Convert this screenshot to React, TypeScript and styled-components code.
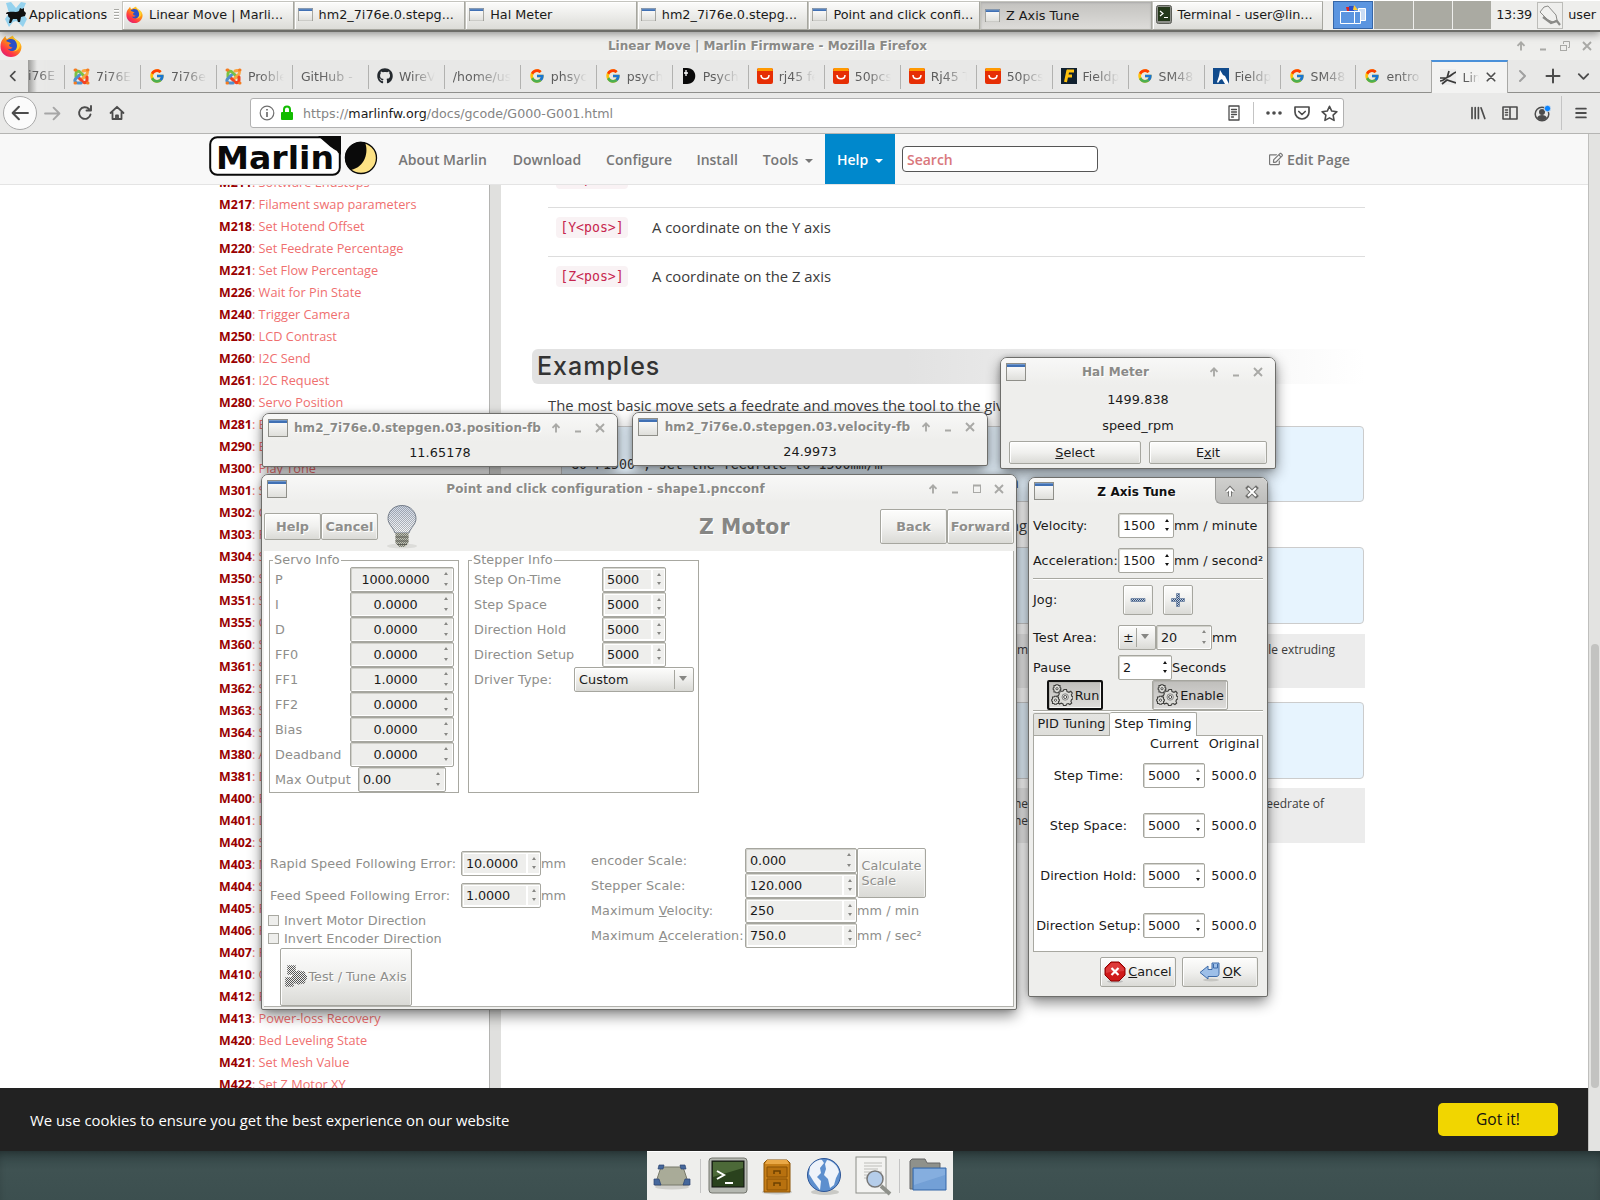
import React from "react";
import styled, { createGlobalStyle, css } from "styled-components";
import { FcGoogle } from "react-icons/fc";
import { FaGithub, FaRegEdit } from "react-icons/fa";

const GTK = `"DejaVu Sans", sans-serif`;
const SITE = `"Open Sans", "Noto Sans", sans-serif`;
const MONO = `"DejaVu Sans Mono", monospace`;

const Global = createGlobalStyle`
  html, body { margin: 0; padding: 0; }
  * { box-sizing: border-box; }
  body { width: 1600px; height: 1200px; overflow: hidden; font-family: ${GTK}; font-size: 12.8px; color: #1a1a1a; }
  svg { display: block; flex: none; }
`;

const Desktop = styled.div`
  position: relative;
  width: 1600px;
  height: 1200px;
  overflow: hidden;
  display: flex;
  flex-direction: column;
  white-space: nowrap;
  background: linear-gradient(#344647 1151px, #3f5252 1170px, #3c4f4f 1200px);
`;

/* ---------- top panel ---------- */
const Panel = styled.div`
  height: 32px;
  flex: none;
  display: flex;
  align-items: stretch;
  background: #eeeeec;
  border-bottom: 2px solid #6c6c68;
  border-top: 1px solid #fff;
  position: relative;
  box-shadow: 0 2px 8px rgba(0, 0, 0, 0.4);
`;
const AppMenu = styled.div`
  width: 122px;
  display: flex;
  align-items: center;
  padding-left: 5px;
  padding-bottom: 2px;
  gap: 2px;
`;
const Grip = styled.div`
  width: 5px;
  height: 12px;
  margin-left: 5px;
  background: repeating-linear-gradient(#a8a8a4 0 1px, #fff 1px 2px, transparent 2px 3px);
`;
const Task = styled.div<{ $on?: boolean }>`
  width: 171.6px;
  height: 29px;
  display: flex;
  align-items: center;
  gap: 6px;
  padding-left: ${(p) => (p.$on ? 4 : 3)}px;
  padding-bottom: 2px;
  border: 1px solid #a6a69f;
  border-left-color: #c4c4be;
  border-top-color: #c4c4be;
  box-shadow: inset 1px 1px 0 #fff;
  background: linear-gradient(#fcfcfb, #dcdcd8);
  ${(p) =>
    p.$on &&
    css`
      background: linear-gradient(#c3c2bf, #dddcd9);
      box-shadow: inset 0 1px 2px #aaa;
      padding-bottom: 0;
    `}
`;
const Pager = styled.div`
  display: flex;
  width: 158px;
  margin-left: 10px;
  gap: 1px;
`;
const Cell = styled.div<{ $on?: boolean }>`
  flex: 1;
  height: 28px;
  background: ${(p) => (p.$on ? "#5b95e0" : "#aaaaa2")};
  border: ${(p) => (p.$on ? "1px solid #3566a8" : "0")};
  display: flex;
  align-items: center;
  justify-content: center;
`;
const Clock = styled.div`
  width: 47px;
  display: flex;
  align-items: center;
  padding: 0 0 2px 5px;
  letter-spacing: -0.2px;
`;
const TrayBtn = styled.div`
  width: 26px;
  height: 27px;
  margin: 1px 4px 0 -1px;
  border: 1px solid #bcbcb8;
  display: flex;
  align-items: center;
  justify-content: center;
`;
const User = styled.div`
  display: flex;
  align-items: center;
  padding: 0 0 2px 1px;
`;

/* ---------- firefox chrome ---------- */
const FxTitle = styled.div`
  height: 28px;
  flex: none;
  display: flex;
  align-items: center;
  background: #eeeeec;
  color: #8a8a87;
  font-weight: bold;
  font-size: 12px;
  text-shadow: 1px 1px 0 #fff;
`;
const FxTitleText = styled.div`
  flex: 1;
  padding-right: 1px;
  text-align: center;
`;
const FxTitleBtns = styled.div`
  display: flex;
  gap: 8px;
  padding-right: 6px;
`;
const TabStrip = styled.div`
  height: 33px;
  flex: none;
  display: flex;
  background: #e8e8e7;
  border-bottom: 1px solid #8f8f8c;
  color: #5e5e5e;
`;
const TabScroll = styled.div`
  width: 28px;
  display: flex;
  align-items: center;
  padding-left: 7px;
`;
const TabFirst = styled.div`
  width: 36px;
  overflow: hidden;
  display: flex;
  align-items: center;
  font-size: 12.4px;
  padding-bottom: 1px;
  background: linear-gradient(90deg, #9a9a98, #e8e8e7 9px);
  mask-image: linear-gradient(90deg, #000 10px, rgba(0, 0, 0, 0.3) 26px);
`;
const Tab = styled.div<{ $icon?: boolean }>`
  width: 75.98px;
  height: 32px;
  display: flex;
  align-items: center;
  gap: 6px;
  padding-left: 9px;
  background: linear-gradient(#b2b2b0, #b2b2b0) left 5px / 1px 24px no-repeat;
`;
const ActiveTab = styled.div`
  width: 77px;
  height: 33px;
  display: flex;
  align-items: center;
  gap: 6px;
  padding: 0 10px 1px 8px;
  background: #f3f3f2;
  border: 1px solid #a8a8a5;
  border-bottom: 0;
  border-top: 2px solid #4a90d9;
`;
const Fade = styled.div<{ $w: number }>`
  width: ${(p) => p.$w}px;
  overflow: hidden;
  font-size: 12.5px;
  mask-image: linear-gradient(90deg, #000 35%, transparent 100%);
`;
const TabTools = styled.div`
  flex: 1;
  display: flex;
  align-items: center;
  justify-content: space-between;
  padding: 0 9px 0 6px;
`;
const NavBar = styled.div`
  height: 41px;
  flex: none;
  display: flex;
  align-items: center;
  background: #e9e9e8;
  border-bottom: 1px solid #b5b5b3;
`;
const BackCircle = styled.div`
  width: 34px;
  height: 34px;
  margin-left: 3px;
  border-radius: 50%;
  border: 1px solid #a9a9a9;
  background: #fbfbfb;
  display: flex;
  align-items: center;
  justify-content: center;
`;
const NavIcons = styled.div`
  width: 213px;
  display: flex;
  align-items: center;
  gap: 16px;
  padding-left: 7px;
`;
const UrlBar = styled.div`
  width: 1094px;
  height: 30px;
  display: flex;
  align-items: center;
  background: #fff;
  border: 1px solid #b1b1b1;
  border-radius: 3px;
  color: #858585;
  padding: 0 5px 0 8px;
  font-size: 12.65px;
  b { color: #1a1a1a; font-weight: normal; }
`;
const UrlText = styled.div`
  flex: 1;
  padding-left: 6px;
`;
const UrlTools = styled.div`
  display: flex;
  align-items: center;
  gap: 11px;
`;
const VRule = styled.div<{ $h: number }>`
  width: 1px;
  height: ${(p) => p.$h}px;
  background: #c4c4c4;
`;
const NavRight = styled.div`
  flex: 1;
  display: flex;
  align-items: center;
  justify-content: flex-end;
  gap: 16px;
  padding-right: 12px;
`;
const MenuGroup = styled.div`
  display: flex;
  align-items: center;
  gap: 12px;
  margin-left: -6px;
`;

/* ---------- web page ---------- */
const Viewport = styled.div`
  height: 1017px;
  flex: none;
  display: flex;
  background: #fff;
`;
const Page = styled.div`
  width: 1588px;
  display: flex;
  flex-direction: column;
  font-family: ${SITE};
`;
const ScrollTrack = styled.div`
  width: 12px;
  background: #e3e3e1;
  border-left: 1px solid #bfbfbd;
  padding: 510px 1px 0 2px;
`;
const ScrollThumb = styled.div`
  height: 444px;
  border-radius: 5px;
  background: #c3c3c1;
`;
const SiteHead = styled.header`
  height: 51px;
  flex: none;
  display: flex;
  align-items: center;
  padding-left: 209px;
  background: #f8f8f8;
  border-bottom: 1px solid #e4e4e4;
  color: #777;
  font-weight: 600;
  font-size: 14px;
`;
const LogoLink = styled.div`
  align-self: flex-start;
  padding-top: 2px;
`;
const Menu = styled.nav`
  display: flex;
  align-items: center;
  height: 50px;
  gap: 24.3px;
  margin-left: 20.5px;
`;
const MenuItem = styled.span<{ $w: number }>`
  width: ${(p) => p.$w}px;
  display: flex;
  align-items: center;
  justify-content: space-between;
`;
const HelpItem = styled.span`
  width: 70px;
  height: 50px;
  margin-left: -12px;
  padding: 0 12px;
  display: flex;
  align-items: center;
  justify-content: space-between;
  background: #0088cc;
  color: #fff;
`;
const Caret = styled.i`
  border: 4px solid transparent;
  border-top-color: currentColor;
  border-bottom: 0;
  margin-top: 3px;
`;
const Search = styled.div`
  width: 196px;
  height: 26px;
  margin-left: 7px;
  padding-left: 4px;
  line-height: 25px;
  border: 1px solid #555;
  border-radius: 4px;
  background: #fff;
  color: #d9777c;
  font-weight: 600;
  font-size: 14px;
`;
const EditLink = styled.div`
  display: flex;
  align-items: center;
  gap: 4px;
  margin-left: 171px;
  font-size: 14.2px;
`;
const SiteBody = styled.div`
  height: 903px;
  flex: none;
  overflow: hidden;
  display: flex;
`;
const Sidebar = styled.div`
  width: 489px;
  padding-left: 219px;
`;
const CodeList = styled.div`
  margin-top: -14px;
`;
const CodeRow = styled.div`
  height: 22px;
  line-height: 22px;
  font-size: 12.75px;
  color: #ef6f6f;
  b { color: #900; font-weight: 700; font-size: 12.4px; }
`;
const Divider = styled.div`
  width: 12px;
  border-left: 1px solid #b4b4b2;
  background: #e0e0de;
`;
const Article = styled.article`
  width: 864px;
  color: #3b3b3b;
  font-size: 14.8px;
`;
const ParamRow = styled.div<{ $h: number; $cut?: boolean }>`
  height: ${(p) => p.$h}px;
  margin-left: 47px;
  padding: ${(p) => (p.$cut ? 0 : 8)}px 0 0 8px;
  display: flex;
  align-items: flex-start;
  gap: 24px;
  line-height: 22px;
  border-top: ${(p) => (p.$cut ? "0" : "1px solid #ddd")};
`;
const Badge = styled.code<{ $cut?: boolean }>`
  width: 72px;
  height: 21px;
  margin-top: ${(p) => (p.$cut ? -17 : 1)}px;
  text-align: center;
  border-radius: 4px;
  background: #f9f2f4;
  color: #c7254e;
  font: 13.2px/21px ${MONO};
`;
const Heading = styled.h2`
  margin: 44px 0 0 31px;
  height: 35px;
  line-height: 35px;
  padding-left: 5px;
  border-radius: 6px;
  font-family: "Inter", "Noto Sans", sans-serif;
  font-weight: 500;
  font-size: 25px;
  letter-spacing: 1px;
  color: #333;
  background: linear-gradient(90deg, #e2e2e2 45%, #fff);
`;
const Para = styled.p<{ $h: number; $w?: number }>`
  margin: 0 0 0 47px;
  height: ${(p) => p.$h}px;
  line-height: ${(p) => p.$h}px;
  ${(p) => p.$w && css`width: ${p.$w}px; text-align: right;`}
`;
const CodeBlock = styled.pre<{ $h: number; $gap: number }>`
  margin: 0 1px ${(p) => p.$gap}px 60px;
  height: ${(p) => p.$h}px;
  padding: 28px 9px 0;
  font: 13.28px/19px ${MONO};
  color: #333;
  background: #e7f4fe;
  border: 1px solid #ccc;
  border-radius: 4px;
`;
const Quote = styled.div<{ $h: number; $gap: number; $pad: number }>`
  margin: 0 0 ${(p) => p.$gap}px 60px;
  height: ${(p) => p.$h}px;
  padding: 7px ${(p) => p.$pad}px 0 0;
  text-align: right;
  background: #ececec;
  font-size: 12px;
  line-height: 17px;
`;
const QuoteLine = styled.div`
  display: grid;
  grid-template-columns: 467px 1fr;
`;
const Cookie = styled.div`
  height: 63px;
  flex: none;
  display: flex;
  align-items: center;
  justify-content: space-between;
  padding: 0 30px;
  background: #222;
  color: #fff;
  font-size: 14.88px;
`;
const GotIt = styled.div`
  width: 120px;
  height: 33px;
  line-height: 32px;
  text-align: center;
  border-radius: 5px;
  background: #f1d600;
  color: #111;
  font-size: 15.6px;
`;

/* ---------- dock ---------- */
const DockWrap = styled.div`
  height: 49px;
  flex: none;
  display: flex;
  padding-left: 647px;
  box-shadow: inset 0 6px 10px -4px rgba(0, 0, 0, 0.35);
`;
const Dock = styled.div`
  width: 306px;
  height: 49px;
  display: grid;
  grid-template-columns: 47px 8px 54px 44px 48px 45px 9px 40px;
  align-items: center;
  padding: 0 0 0 6px;
  background: #eeeeec;
  border-top: 1px solid #fff;
`;

/* ---------- windows ---------- */
const Win = styled.section<{ $x: number; $y: number; $w: number; $h: number }>`
  position: absolute;
  left: ${(p) => p.$x}px;
  top: ${(p) => p.$y}px;
  width: ${(p) => p.$w}px;
  height: ${(p) => p.$h}px;
  display: flex;
  flex-direction: column;
  background: #eeeeec;
  border: 1px solid #6e6e6b;
  border-radius: 7px 7px 2px 2px;
  overflow: hidden;
  letter-spacing: 0.08px;
`;
const Shadow = styled.div<{ $x: number; $y: number; $w: number; $h: number }>`
  position: absolute;
  left: ${(p) => p.$x}px;
  top: ${(p) => p.$y}px;
  width: ${(p) => p.$w}px;
  height: ${(p) => p.$h}px;
  border-radius: 7px;
  box-shadow: 0 6px 14px rgba(0, 0, 0, 0.45), 0 0 5px rgba(0, 0, 0, 0.2);
`;
const TitleRow = styled.div<{ $h: number; $active?: boolean }>`
  height: ${(p) => p.$h}px;
  flex: none;
  display: flex;
  align-items: center;
  padding-left: 5px;
  background: linear-gradient(#f8f8f7, #eeeeec);
  font-weight: bold;
  font-size: 12px;
  color: ${(p) => (p.$active ? "#111" : "#8a8a87")};
  text-shadow: 1px 1px 0 #fff;
`;
const TitleText = styled.div`
  flex: 1;
  text-align: center;
  padding: 1px 0 0 4px;
`;
const TitleBtns = styled.div<{ $active?: boolean }>`
  display: flex;
  gap: 8px;
  padding: 0 10px 0 6px;
  ${(p) =>
    p.$active &&
    css`
      align-self: stretch;
      align-items: center;
      padding: 3px 8px 0 7px;
      background: linear-gradient(#d0d0ce, #bdbdbb);
      border-left: 1px solid #9b9b99;
      border-bottom: 1px solid #9b9b99;
      border-radius: 0 0 0 6px;
    `}
`;
const Reading = styled.div<{ $h: number }>`
  height: ${(p) => p.$h}px;
  line-height: ${(p) => p.$h}px;
  text-align: center;
`;
const Btn = styled.button<{ $w: number; $h: number; $off?: boolean; $bold?: boolean; $pressed?: boolean; $focus?: boolean }>`
  width: ${(p) => p.$w}px;
  height: ${(p) => p.$h}px;
  flex: none;
  display: flex;
  align-items: center;
  justify-content: center;
  gap: 2px;
  padding: 0;
  margin: 0;
  font-family: inherit;
  font-size: 12.8px;
  font-weight: ${(p) => (p.$bold ? "bold" : "normal")};
  text-align: left;
  white-space: pre;
  line-height: 15px;
  color: ${(p) => (p.$off ? "#8e8e8b" : "#1a1a1a")};
  text-shadow: ${(p) => (p.$off ? "1px 1px 0 #fff" : "none")};
  border: ${(p) => (p.$focus ? "2px solid #111" : "1px solid #a6a69f")};
  border-radius: 2px;
  background: ${(p) =>
    p.$pressed ? "linear-gradient(#bfbebb, #dedddb)" : "linear-gradient(#fdfdfc, #f0f0ee 50%, #dadad6)"};
  box-shadow: ${(p) => (p.$pressed ? "inset 1px 1px 0 #b3b2ae, inset -1px -1px 0 #f6f6f5" : "inset 1px 1px 0 #fff, inset -1px 0 0 #f2f2f0")};
`;
const SpinBox = styled.div<{ $w: number; $off?: boolean; $plain?: boolean }>`
  width: ${(p) => p.$w}px;
  height: 25px;
  flex: none;
  display: flex;
  align-items: stretch;
  padding: ${(p) => (p.$plain ? "1px" : "2px")};
  border: 1px solid #a6a69f;
  border-radius: 2px;
  background: ${(p) => (p.$plain ? "#eeeeec" : "#fff")};
  box-shadow: ${(p) => (p.$plain ? "inset 1px 1px 0 #d0d0ca, inset -1px -1px 0 #fff" : "inset 1px 1px 0 #d6d6d0")};
  color: #1a1a1a;
`;
const SpinVal = styled.div<{ $off?: boolean; $center?: boolean; $plain?: boolean }>`
  flex: 1;
  display: flex;
  align-items: center;
  justify-content: ${(p) => (p.$center ? "center" : "flex-start")};
  padding-left: ${(p) => (p.$plain ? 3 : 2)}px;
  padding-right: ${(p) => (p.$center ? 4 : 0)}px;
  letter-spacing: -0.12px;
  background: ${(p) => (p.$off ? "#eeeeec" : "transparent")};
`;
const Steps = styled.div<{ $off?: boolean; $plain?: boolean }>`
  width: ${(p) => (p.$plain ? 12 : 11)}px;
  margin-left: ${(p) => (p.$plain ? 0 : 2)}px;
  margin-right: ${(p) => (p.$plain ? 0 : -1)}px;
  display: flex;
  flex-direction: column;
  justify-content: space-between;
  align-items: center;
  padding: 3px 0 4px;
  background: ${(p) => (p.$off ? "#f0f0ee" : "transparent")};
`;
const Arrow = styled.i<{ $down?: boolean; $c: string }>`
  border: 2.5px solid transparent;
  ${(p) =>
    p.$down
      ? css`border-top: 3px solid ${p.$c}; border-bottom: 0;`
      : css`border-bottom: 3px solid ${p.$c}; border-top: 0;`}
`;
const Combo = styled.div<{ $w: number }>`
  width: ${(p) => p.$w}px;
  height: 25px;
  flex: none;
  display: flex;
  align-items: center;
  padding-left: 4px;
  border: 1px solid #a6a69f;
  border-radius: 2px;
  color: #1a1a1a;
  background: linear-gradient(#fdfdfc, #eeeeec 50%, #dadad6);
  box-shadow: inset 1px 1px 0 #fff;
`;
const ComboText = styled.span`
  flex: 1;
`;
const ComboArrow = styled.span`
  width: 19px;
  height: 19px;
  padding: 0 3px 2px 0;
  display: flex;
  align-items: center;
  justify-content: center;
  border-left: 1px solid #a6a69f;
  i { border: 4.5px solid transparent; border-top: 5px solid #878784; border-bottom: 0; }
`;

/* ---------- pncconf window ---------- */
const PncHead = styled.div`
  height: 49px;
  flex: none;
  display: flex;
  align-items: center;
  padding: 0 2px;
`;
const PncTitle = styled.div`
  width: 90px;
  margin: 0 auto 0 277px;
  font-size: 20.4px;
  font-weight: bold;
  color: #868684;
  text-shadow: 1px 1px 0 #fff;
`;
const BulbSlot = styled.div`
  width: 40px;
  margin-left: 4px;
  display: flex;
  justify-content: center;
`;
const Notebook = styled.div`
  height: 456px;
  margin: 0 2px;
  background: #fff;
  border-right: 1px solid #b2b2ad;
  border-bottom: 1px solid #b2b2ad;
  color: #8e8e8b;
  display: flex;
  flex-direction: column;
`;
const Frames = styled.div`
  height: 297px;
  flex: none;
  display: flex;
  align-items: flex-start;
  gap: 9px;
  padding: 9px 0 0 5px;
`;
const Frame = styled.div<{ $w: number }>`
  width: ${(p) => p.$w}px;
  height: 233px;
  border: 1px solid #a8a8a1;
  padding-left: 5px;
`;
const Legend = styled.div`
  width: max-content;
  height: 15px;
  line-height: 15px;
  margin: -9px 0 0 -2px;
  padding: 0 1px;
  background: #fff;
`;
const Field = styled.div<{ $lab: number }>`
  height: 25px;
  display: grid;
  grid-template-columns: ${(p) => p.$lab}px auto;
  justify-content: start;
  align-items: center;
`;
const Lower = styled.div`
  display: flex;
  flex: 1;
`;
const LowLeft = styled.div`
  width: 327px;
  padding: 3px 0 0 6px;
`;
const ErrRow = styled.div`
  height: 25px;
  display: flex;
  align-items: center;
  margin-bottom: 7px;
`;
const ErrLabel = styled.div`
  width: 191px;
`;
const Checks = styled.div`
  margin: -4px 0 1px -2px;
`;
const Check = styled.div`
  height: 18px;
  display: flex;
  align-items: center;
  gap: 5px;
`;
const CheckBox = styled.i`
  width: 11px;
  height: 11px;
  border: 1px solid #a8a8a1;
  background: #eeeeec;
`;
const TestSlot = styled.div`
  padding-left: 10px;
  button { padding-bottom: 2px; gap: 1px; }
`;
const ScaleGrid = styled.div`
  display: grid;
  grid-template-columns: 154px 112px 70px;
  grid-template-rows: repeat(4, 25px);
  height: 100px;
  align-items: center;
`;
const Span2 = styled.div`
  grid-row: span 2;
`;

/* ---------- tuning window ---------- */
const TuneBody = styled.div`
  padding: 4px 4px 0;
  display: flex;
  flex-direction: column;
`;
const TuneRow = styled.div<{ $h: number }>`
  height: ${(p) => p.$h}px;
  display: flex;
  align-items: center;
`;
const TuneLabel = styled.div`
  width: 85px;
  flex: none;
`;
const Jog = styled.div`
  display: flex;
  gap: 10px;
  padding-left: 5px;
`;
const RunRow = styled.div`
  height: 30px;
  display: flex;
  gap: 49px;
  padding-left: 14px;
`;
const HLine = styled.div`
  height: 2px;
  flex: none;
  background: #a8a8a1;
  border-bottom: 1px solid #fff;
`;
const TuneTabs = styled.div`
  height: 24px;
  display: flex;
  align-items: flex-end;
`;
const TuneTab = styled.div<{ $on?: boolean; $w: number }>`
  width: ${(p) => p.$w}px;
  height: ${(p) => (p.$on ? 24 : 22)}px;
  line-height: ${(p) => (p.$on ? 22 : 20)}px;
  margin-bottom: ${(p) => (p.$on ? 0 : 1)}px;
  position: relative;
  z-index: 1;
  text-align: center;
  border: 1px solid #a8a8a1;
  border-bottom: 0;
  border-radius: 2px 2px 0 0;
  border-left-width: ${(p) => (p.$on ? 0 : 1)}px;
  background: ${(p) => (p.$on ? "#fff" : "linear-gradient(#e4e4e1, #dededa)")};
`;
const TunePage = styled.div`
  height: 217px;
  margin-top: -1px;
  background: #fff;
  border: 1px solid #a8a8a1;
`;
const Cols = styled.div`
  display: flex;
  height: 14px;
  line-height: 15px;
  padding-left: 116px;
  gap: 10px;
`;
const Timing = styled.div`
  height: 50px;
  display: grid;
  grid-template-columns: 109px 62px 58px;
  align-items: center;
  text-align: center;
`;
const Footer = styled.div`
  height: 39px;
  display: flex;
  align-items: center;
  justify-content: flex-end;
  gap: 6px;
  padding-right: 5px;
`;

const HalButtons = styled.div`
  display: flex;
  gap: 8px;
  padding: 3px 0 0 8px;
`;

/* ---------- pieces ---------- */
const WinIcon = ({ s = 20 }: { s?: number }) => (
  <svg width={s} height={s * 0.9} viewBox="0 0 20 18">
    <defs>
      <linearGradient id="wi" x1="0" y1="0" x2="0" y2="1">
        <stop offset="0" stopColor="#fff" />
        <stop offset="1" stopColor="#dededa" />
      </linearGradient>
    </defs>
    <rect x="0.5" y="0.5" width="19" height="17" fill="url(#wi)" stroke="#8f8f89" />
    <rect x="1" y="1" width="18" height="3" fill="#4070b4" />
    <rect x="1" y="1" width="18" height="1" fill="#6f97cc" />
  </svg>
);
const TermIcon = () => (
  <svg width="16" height="20" viewBox="0 0 16 20">
    <rect x="0.5" y="0.5" width="15" height="18" rx="2" fill="#8d8f89" stroke="#5c5e58" />
    <rect x="2" y="2" width="12" height="14" fill="#24381a" />
    <path d="M4 6l3 2.500L4 11M8 12.500h4" stroke="#fff" strokeWidth="1.200" fill="none" />
  </svg>
);
const Firefox = ({ s }: { s: number }) => (
  <svg width={s} height={s} viewBox="0 0 22 22">
    <defs>
      <linearGradient id="fx" x1="0.9" y1="0" x2="0.2" y2="1">
        <stop offset="0" stopColor="#fff04d" />
        <stop offset="0.4" stopColor="#ff980e" />
        <stop offset="0.75" stopColor="#ff3647" />
        <stop offset="1" stopColor="#d81f75" />
      </linearGradient>
    </defs>
    <path d="M3 4C4 3 5 1 5.500 1c0 1.500.5 2.500 1.500 3C9 3 10 2 13 .5c0 2 2 3 4 5 2 .5 4 3 4.500 6C21.500 17.500 17 22 11 22S.5 17.500.5 11.500C.5 8 1.500 5.500 3 4z" fill="url(#fx)" />
    <path d="M6 6c3-3 8-2.500 10.500.5 2 2.500 1.500 7-1 8.500-3 2-6.500 1-8-1.500 2 1 4 .5 5-1-1.500 0-3.500-1-3.500-2.500 0-.7 1-1 2-1-.5-1.500-3-2-5-3z" fill="#2b50c8" />
    <path d="M12.500 1c0 3 4.500 4.500 4.500 10 0 3-2 5-4 5.500 4 0 7-3 7-7C20 5.500 14.500 4.500 12.500 1z" fill="#ffcf2e" />
  </svg>
);
const Mouse = () => (
  <svg width="22" height="26" viewBox="0 0 22 26">
    <path d="M1 1l5-1 5 6 5-6 5 1-4 9 5 7-4 8-5-5-2-1-3 1-4 5-4-8 4-6z" fill="#8fd0ee" opacity="0.95" />
    <path d="M1 12c0-2 2-2 3-2 4-1 7 1 10-1l1-3 2 1 2-1 0 3 2 2-1 3-4 1-1 5h-2l-1-3H8l-2 4H4l1-5c-2-1-2-2-2-4z" fill="#111" />
  </svg>
);
const Up = ({ c = "#a9a9a6" }: { c?: string }) => (
  <svg width="14" height="14" viewBox="0 0 14 14">
    <path d="M7 11.500V4M3.500 6.800L7 3.300l3.500 3.500" stroke={c} strokeWidth="1.900" fill="none" />
  </svg>
);
const UpHot = () => (
  <svg width="14" height="14" viewBox="0 0 14 14">
    <path d="M7 11.500V4M3.500 6.800L7 3.300l3.500 3.500" stroke="#6f6f6d" strokeWidth="3.800" fill="none" />
    <path d="M7 11.500V4M3.500 6.800L7 3.300l3.500 3.500" stroke="#fff" strokeWidth="1.900" fill="none" />
  </svg>
);
const Min = () => (
  <svg width="14" height="14" viewBox="0 0 14 14">
    <path d="M4 10.500h6" stroke="#a9a9a6" strokeWidth="2" />
  </svg>
);
const Max = () => (
  <svg width="14" height="14" viewBox="0 0 14 14">
    <rect x="3.500" y="3.500" width="7" height="7" stroke="#a9a9a6" fill="none" />
    <path d="M3 3.500h8" stroke="#a9a9a6" strokeWidth="2" />
  </svg>
);
const Restore = () => (
  <svg width="14" height="14" viewBox="0 0 14 14">
    <rect x="2.500" y="6.500" width="6" height="5" stroke="#a9a9a6" fill="none" />
    <path d="M5.500 5V2.500h6v6H10" stroke="#a9a9a6" fill="none" />
  </svg>
);
const Close = () => (
  <svg width="14" height="14" viewBox="0 0 14 14">
    <path d="M3 3l8 8M11 3l-8 8" stroke="#a9a9a6" strokeWidth="1.900" />
  </svg>
);
const CloseHot = () => (
  <svg width="14" height="14" viewBox="0 0 14 14">
    <path d="M3 3l8 8M11 3l-8 8" stroke="#6f6f6d" strokeWidth="4" strokeLinecap="square" />
    <path d="M3 3l8 8M11 3l-8 8" stroke="#fff" strokeWidth="2" />
  </svg>
);
const Joomla = () => (
  <svg width="17" height="17" viewBox="0 0 17 17" fill="none" strokeWidth="3" strokeLinecap="round">
    <path d="M3 10V6.500C3 4 5.500 3.500 7 5l5 5" stroke="#7ac143" transform="translate(0 -1)" />
    <path d="M7 3l2-.500C11 2 12 4 11 6L6 11" stroke="#f9a541" transform="translate(3 0)" />
    <path d="M14 8v3c0 3-3 3-4 2L5 8" stroke="#f44321" transform="translate(0 1)" />
    <path d="M10 14H7c-2.500 0-4-2-2.500-4l4-4" stroke="#5091cd" transform="translate(-2 1)" />
    <path d="M2 2h1M14.500 2h.5M2 15h.500M14.500 15h.5" stroke="#f47b20" />
  </svg>
);
const Ali = () => (
  <svg width="16" height="16" viewBox="0 0 16 16">
    <rect width="16" height="16" rx="2" fill="#e62e04" />
    <path d="M1 0h14l1 3H0z" fill="#ff9900" />
    <path d="M4 7c0 5 8 5 8 0" stroke="#fff" strokeWidth="1.500" fill="none" />
  </svg>
);
const Psy = () => (
  <svg width="16" height="16" viewBox="0 0 16 16">
    <path d="M2 0h4c11 0 11 16 0 16H2z" fill="#0a0a0a" />
    <path d="M5 2v6M3 5h4" stroke="#fff" strokeWidth="1.300" />
  </svg>
);
const FieldF = () => (
  <svg width="16" height="16" viewBox="0 0 16 16">
    <rect width="16" height="16" fill="#10202e" />
    <path d="M6 3h7M5 8h6M7 2L4.500 14" stroke="#ffc20e" strokeWidth="3" />
  </svg>
);
const FieldB = () => (
  <svg width="16" height="16" viewBox="0 0 16 16">
    <rect width="16" height="16" fill="#114b8c" />
    <path d="M7 2l3 5 2 1 4 8h-4l-3-5-2 1-2 3-1-1 2-6z" fill="#fff" />
  </svg>
);
const LinIcon = () => (
  <svg width="16" height="16" viewBox="0 0 16 16">
    <rect width="16" height="16" fill="#ececec" />
    <path d="M0 12c4 0 5-3 8-4s5-4 8-5M7 9l2-7M2 15l5-4 9 3M0 9h6" stroke="#3a3a3a" strokeWidth="1.700" fill="none" />
  </svg>
);
const G = () => <FcGoogle size={16} />;

const tabs: { t: string; i?: React.ReactNode }[] = [
  { t: "7i76E", i: <Joomla /> },
  { t: "7i76e", i: <G /> },
  { t: "Proble", i: <Joomla /> },
  { t: "GitHub - " },
  { t: "WireV", i: <FaGithub size={16} color="#24292e" /> },
  { t: "/home/us" },
  { t: "phsyc", i: <G /> },
  { t: "psych", i: <G /> },
  { t: "Psych", i: <Psy /> },
  { t: "rj45 fe", i: <Ali /> },
  { t: "50pcs", i: <Ali /> },
  { t: "Rj45 T", i: <Ali /> },
  { t: "50pcs", i: <Ali /> },
  { t: "Fieldp", i: <FieldF /> },
  { t: "SM48", i: <G /> },
  { t: "Fieldp", i: <FieldB /> },
  { t: "SM48", i: <G /> },
  { t: "entro", i: <G /> },
];

const codes: [string, string][] = [
  ["M211", "Software Endstops"],
  ["M217", "Filament swap parameters"],
  ["M218", "Set Hotend Offset"],
  ["M220", "Set Feedrate Percentage"],
  ["M221", "Set Flow Percentage"],
  ["M226", "Wait for Pin State"],
  ["M240", "Trigger Camera"],
  ["M250", "LCD Contrast"],
  ["M260", "I2C Send"],
  ["M261", "I2C Request"],
  ["M280", "Servo Position"],
  ["M281", "Edit Servo Angles"],
  ["M290", "Babystep"],
  ["M300", "Play Tone"],
  ["M301", "Set Hotend PID"],
  ["M302", "Cold Extrude"],
  ["M303", "PID autotune"],
  ["M304", "Set Bed PID"],
  ["M350", "Set micro-stepping"],
  ["M351", "Set Microstep Pins"],
  ["M355", "Case Light Control"],
  ["M360", "SCARA Theta A"],
  ["M361", "SCARA Theta-B"],
  ["M362", "SCARA Psi-A"],
  ["M363", "SCARA Psi-B"],
  ["M364", "SCARA Psi-C"],
  ["M380", "Activate Solenoid"],
  ["M381", "Deactivate Solenoids"],
  ["M400", "Finish Moves"],
  ["M401", "Deploy Probe"],
  ["M402", "Stow Probe"],
  ["M403", "MMU2 Filament Type"],
  ["M404", "Set Filament Diameter"],
  ["M405", "Filament Width Sensor On"],
  ["M406", "Filament Width Sensor Off"],
  ["M407", "Filament Width"],
  ["M410", "Quickstop"],
  ["M412", "Filament Runout"],
  ["M413", "Power-loss Recovery"],
  ["M420", "Bed Leveling State"],
  ["M421", "Set Mesh Value"],
  ["M422", "Set Z Motor XY"],
];

type SpinProps = { w: number; v: string; off?: boolean; center?: boolean; plain?: boolean; half?: boolean };
const Spin = ({ w, v, off, center, plain, half }: SpinProps) => (
  <SpinBox $w={w} $plain={plain}>
    <SpinVal $off={off && !plain} $center={center} $plain={plain}>{v}</SpinVal>
    <Steps $off={off && !plain} $plain={plain}>
      <Arrow $c={off || half ? "#878784" : "#111"} />
      <Arrow $down $c={off ? "#878784" : "#111"} />
    </Steps>
  </SpinBox>
);

type FrameProps = {
  x: number; y: number; w: number; h: number; title: string; th: number;
  active?: boolean; max?: boolean; children: React.ReactNode;
};
const AppWindow = ({ x, y, w, h, title, th, active, max, children }: FrameProps) => (
  <>
    <Shadow $x={x} $y={y} $w={w} $h={h} />
    <Win $x={x} $y={y} $w={w} $h={h}>
      <TitleRow $h={th} $active={active}>
        <WinIcon />
        <TitleText>{title}</TitleText>
        {active ? (
          <TitleBtns $active><UpHot /><CloseHot /></TitleBtns>
        ) : (
          <TitleBtns><Up /><Min />{max && <Max />}<Close /></TitleBtns>
        )}
      </TitleRow>
      {children}
    </Win>
  </>
);

const Gears = ({ off }: { off?: boolean }) => (
  <svg width="22" height="22" viewBox="0 0 22 22">
    <defs>
      <pattern id="dots" width="2" height="2" patternUnits="userSpaceOnUse">
        <rect width="1" height="1" fill="#555" />
        <rect x="1" y="1" width="1" height="1" fill="#555" />
      </pattern>
    </defs>
    {off ? (
      <g fill="url(#dots)" stroke="url(#dots)" strokeWidth="1.500">
        <path d="M14 6l2 1 3 0 1 3 2 2-2 3-1 3-3 0-2 1-3-1-2-1-1-3-1-2 2-2 0-3 3 0z" />
        <path d="M3 1h7v8H3z" />
        <path d="M1 13h7v8H1z" />
      </g>
    ) : (
      <>
        <g fill="#dcdcd8" stroke="#3f3f3d" strokeWidth="1.100">
          <path d="M13 5.500h2.500l.5 2 2 .8 1.800-1 1.500 1.800-1 1.700.6 1.700h1v2.500l-1.300.5-.7 1.700.8 1.800-1.800 1.500-1.700-1-1.700.6-.5 1.400h-2.500l-.5-1.500-1.800-.8-1.700.8-1.300-1.800.8-1.700-.6-1.600-1.400-.6v-2.200l1.500-.6.8-1.700-.8-1.700 1.700-1.500 1.700.8 1.500-.6z" />
          <path d="M3 1.500h1.500l.5-.8h2l.5.8H9v2l.8.500v1.500L9 6v2H7.500l-.5.800H5L4.500 8H3V6l-.8-.500V4L3 3.500z" />
          <path d="M1.500 13H3l.5-.8h2l.5.8h1.500v2l.8.500V17l-.8.500v2H6l-.5.800h-2L3 19.500H1.500v-2L.7 17v-1.500l.8-.500z" />
        </g>
        <g fill="#fff" stroke="#4a4a48">
          <circle cx="14.200" cy="13" r="3.200" fill="none" stroke="#888" />
          <circle cx="14.200" cy="13" r="1.500" />
          <circle cx="6" cy="4.700" r="1.100" />
          <circle cx="4.500" cy="16.200" r="1.100" />
        </g>
      </>
    )}
  </svg>
);
const Bulb = () => (
  <svg width="34" height="45" viewBox="0 0 34 45">
    <defs>
      <pattern id="mesh" width="2" height="2" patternUnits="userSpaceOnUse">
        <rect width="1" height="1" fill="#3c4654" opacity="0.600" />
        <rect x="1" y="1" width="1" height="1" fill="#3c4654" opacity="0.600" />
      </pattern>
      <linearGradient id="bg" x1="0" y1="0" x2="0" y2="1">
        <stop offset="0" stopColor="#ccd4e2" />
        <stop offset="1" stopColor="#f8f8f8" />
      </linearGradient>
    </defs>
    <ellipse cx="17" cy="42" rx="15" ry="2.500" fill="#dcdcd9" />
    <path d="M17 1.500C8 1.500 3 8 3 14.500c0 6 5 8.500 7 14.500h14c2-6 7-8.500 7-14.500S26 1.500 17 1.500z" fill="url(#bg)" stroke="#7c8490" />
    <path d="M17 1.500C8 1.500 3 8 3 14.500c0 6 5 8.500 7 14.500h14c2-6 7-8.500 7-14.500S26 1.500 17 1.500z" fill="url(#mesh)" opacity="0.600" />
    <path d="M10.500 29h13v10l-4 4h-5l-4-4z" fill="#c4c2ad" />
    <path d="M10.500 29h13v10l-4 4h-5l-4-4z" fill="url(#mesh)" />
    <path d="M10.500 33h13M10.500 37h13M12 40.500h10" stroke="#5f5f56" />
  </svg>
);
const MinusPlus = ({ plus }: { plus?: boolean }) => (
  <svg width="16" height="16" viewBox="0 0 16 16">
    <defs>
      <pattern id="pm" width="2" height="2" patternUnits="userSpaceOnUse">
        <rect width="2" height="2" fill="#c3cddb" />
        <rect width="1" height="1" fill="#31507c" />
        <rect x="1" y="1" width="1" height="1" fill="#31507c" />
      </pattern>
    </defs>
    <path d={plus ? "M6.500 1.500h3v5h5v3h-5v5h-3v-5h-5v-3h5z" : "M1 6.500h14v3H1z"} fill="url(#pm)" stroke="#6d83a3" strokeWidth="0.800" />
  </svg>
);
const StopIcon = () => (
  <svg width="22" height="22" viewBox="0 0 22 22">
    <ellipse cx="11" cy="20.500" rx="8" ry="1.500" fill="#bbb" />
    <path d="M7 1h8l6 6v7l-6 6H7l-6-6V7z" fill="#cf1a1a" stroke="#8c0000" />
    <path d="M7.500 2h7L20 7.500V10c-6 1-12 0-18 2V7.500z" fill="#e65050" opacity="0.600" />
    <path d="M7.500 7l7 7M14.500 7l-7 7" stroke="#fff" strokeWidth="2.200" />
  </svg>
);
const OkIcon = () => (
  <svg width="22" height="20" viewBox="0 0 22 20">
    <ellipse cx="12" cy="18" rx="8" ry="1.500" fill="#c6c6c2" />
    <path d="M1 10.500L9 4v3.500h4V1h7v10.500c0 2-1 3-3 3H9V17z" fill="#9dbfe8" stroke="#3c6aa8" />
    <path d="M14.500 2v4h4V2" fill="none" stroke="#3c6aa8" />
  </svg>
);

const Logo = () => (
  <svg width="169" height="40" viewBox="0 0 169 40">
    <rect x="1.200" y="1.200" width="129.600" height="37.600" rx="7" fill="#fff" stroke="#0a0a0a" strokeWidth="2" />
    <path d="M109 0h23v19c-1-1.500-3-1.500-4-4l-3.500-2c-1-1-3-2-4-3z" fill="#0a0a0a" />
    <text x="7" y="33" textLength="118" lengthAdjust="spacingAndGlyphs" fontFamily="DejaVu Sans" fontWeight="bold" fontSize="32" fill="#0a0a0a">Marlin</text>
    <circle cx="152" cy="22" r="15.500" fill="#fde284" stroke="#0a0a0a" strokeWidth="1.300" />
    <path d="M156 6.500C160 16 156 31 142 34A15.700 15.700 0 0 1 156 6.500z" fill="#0a0a0a" />
  </svg>
);

const ink = "#4c4c4c";
const Stroke = ({ d, s = 16, c = ink, w = 2, o = 1 }: { d: string; s?: number; c?: string; w?: number; o?: number }) => (
  <svg width={s} height={s} viewBox="0 0 16 16" fill="none" stroke={c} strokeWidth={w} strokeLinecap="round" strokeLinejoin="round" opacity={o}>
    <path d={d} />
  </svg>
);

const TopPanel = () => (
  <Panel>
    <AppMenu><Mouse />Applications<Grip /></AppMenu>
    <Task><Firefox s={17} />Linear Move | Marli...</Task>
    <Task><WinIcon s={15} />hm2_7i76e.0.stepg...</Task>
    <Task><WinIcon s={15} />Hal Meter</Task>
    <Task><WinIcon s={15} />hm2_7i76e.0.stepg...</Task>
    <Task><WinIcon s={15} />Point and click confi...</Task>
    <Task $on><WinIcon s={15} />Z Axis Tune</Task>
    <Task><TermIcon />Terminal - user@lin...</Task>
    <Pager>
      <Cell $on>
        <svg width="28" height="20" viewBox="0 0 28 20">
          <path d="M1.500 6.500h14v12h-14z" fill="#5b95e0" stroke="#fff" />
          <path d="M19.500 3.500h7v12h-7z" fill="#c9dcf4" stroke="#fff" />
          <path d="M15.500 6.500h6v12h-6z" fill="#5b95e0" stroke="#fff" />
          <path d="M7 2h4v4H8z" fill="#d22" /><path d="M10 1h5v5h-5z" fill="#2b50c8" /><path d="M15 0l4 5h-5z" fill="#fc3" />
        </svg>
      </Cell>
      <Cell /><Cell /><Cell />
    </Pager>
    <Clock>13:39</Clock>
    <TrayBtn>
      <svg width="22" height="22" viewBox="0 0 22 22">
        <path d="M1 7l4-5 4-1 8 9 1 5-4 2-5-2z" fill="#f0f0ee" stroke="#8b8b88" />
        <path d="M4 12l8 6 6-2 3 4" fill="none" stroke="#8a8a87" strokeWidth="2.200" />
      </svg>
    </TrayBtn>
    <User>user</User>
  </Panel>
);

const Browser = () => (
  <>
    <FxTitle>
      <Firefox s={22} />
      <FxTitleText>Linear Move | Marlin Firmware - Mozilla Firefox</FxTitleText>
      <FxTitleBtns><Up /><Min /><Restore /><Close /></FxTitleBtns>
    </FxTitle>
    <TabStrip>
      <TabScroll><Stroke d="M9 3L4 8l5 5" s={14} /></TabScroll>
      <TabFirst>i76E</TabFirst>
      {tabs.map((t, k) => (
        <Tab key={k}>
          {t.i}
          <Fade $w={t.i ? 36 : 58}>{t.t}</Fade>
        </Tab>
      ))}
      <ActiveTab>
        <LinIcon />
        <Fade $w={18}>Lin</Fade>
        <Stroke d="M3 3l10 10M13 3L3 13" s={12} w={2.2} />
      </ActiveTab>
      <TabTools>
        <Stroke d="M6 3l5 5-5 5" c="#a0a0a0" />
        <Stroke d="M8 1.500v13M1.500 8h13" />
        <Stroke d="M3 5.500l5 5 5-5" s={15} />
      </TabTools>
    </TabStrip>
    <NavBar>
      <BackCircle><Stroke d="M15 8H2M7 2.500L1.500 8 7 13.500" s={18} w={1.900} /></BackCircle>
      <NavIcons>
        <Stroke d="M1 8h13M9 2.500L14.500 8 9 13.500" s={17} w={1.800} c="#a6a6a6" />
        <Stroke d="M13.500 9.500A5.800 5.800 0 1 1 12 4M14 1v4.500H9.500" w={1.900} />
        <Stroke d="M1.500 8L8 1.800 14.500 8M3.500 7.500V14h9V7.500M7 14v-3.500h2V14" w={1.800} />
      </NavIcons>
      <UrlBar>
        <svg width="16" height="16" viewBox="0 0 16 16">
          <circle cx="8" cy="8" r="6.800" fill="none" stroke="#6f6f6f" strokeWidth="1.200" />
          <path d="M8 7v5M8 4v1.600" stroke="#6f6f6f" strokeWidth="1.700" />
        </svg>
        <svg width="22" height="16" viewBox="-6 0 22 16">
          <path d="M3 8V4.500a3 3 0 0 1 6 0V8" fill="none" stroke="#12bc00" strokeWidth="2" />
          <rect x="0" y="7" width="12" height="8" rx="1" fill="#12bc00" />
        </svg>
        <UrlText>https://<b>marlinfw.org</b>/docs/gcode/G000-G001.html</UrlText>
        <UrlTools>
          <Stroke d="M3 1h10v14H3zM5.500 4.500h5M5.500 7h5M5.500 9.500h5M5.500 12h2" s={16} w={1.300} />
          <VRule $h={22} />
          <svg width="18" height="16" viewBox="0 0 18 16"><g fill={ink}><circle cx="3" cy="8" r="1.800" /><circle cx="9" cy="8" r="1.800" /><circle cx="15" cy="8" r="1.800" /></g></svg>
          <Stroke d="M1 2h14v5a7 7 0 0 1-14 0zM4.800 6.500L8 9.500l3.200-3" s={16} w={1.700} />
          <Stroke d="M8 1.200l2.100 4.500 4.900.6-3.600 3.300.9 4.900L8 12.100l-4.300 2.400.9-4.900L1 6.300l4.900-.6z" s={17} w={1.500} />
        </UrlTools>
      </UrlBar>
      <NavRight>
        <Stroke d="M2 2.500v11M5.200 2.500v11M8.400 2.500v11M11 2.800l3.800 10.700" w={1.700} />
        <Stroke d="M1 2h14v12H1zM8 2v12M3.500 5h2M3.500 7.500h2M3.500 10h2" w={1.600} />
        <svg width="17" height="17" viewBox="0 0 17 17">
          <circle cx="8" cy="9" r="6.800" fill="none" stroke={ink} strokeWidth="1.500" />
          <circle cx="8" cy="7" r="3" fill={ink} />
          <path d="M3 13c1-4 9-4 10 0-3 3-7 3-10 0z" fill={ink} />
          <circle cx="13.500" cy="3.500" r="3.200" fill="#0a84ff" stroke="#e9e9e8" strokeWidth="0.800" />
        </svg>
        <MenuGroup>
          <VRule $h={34} />
          <Stroke d="M2.500 3h11M2.500 8h11M2.500 13h11" s={14} w={2.2} />
        </MenuGroup>
      </NavRight>
    </NavBar>
  </>
);

const Site = () => (
  <Viewport>
    <Page>
      <SiteHead>
        <LogoLink><Logo /></LogoLink>
        <Menu>
          <MenuItem $w={90}>About Marlin</MenuItem>
          <MenuItem $w={69}>Download</MenuItem>
          <MenuItem $w={66}>Configure</MenuItem>
          <MenuItem $w={42}>Install</MenuItem>
          <MenuItem $w={50}>Tools<Caret /></MenuItem>
          <HelpItem>Help<Caret /></HelpItem>
        </Menu>
        <Search>Search</Search>
        <EditLink><FaRegEdit size={14} />Edit Page</EditLink>
      </SiteHead>
      <SiteBody>
        <Sidebar>
          <CodeList>
            {codes.map(([c, t]) => (
              <CodeRow key={c}><b>{c}</b>: {t}</CodeRow>
            ))}
          </CodeList>
        </Sidebar>
        <Divider />
        <Article>
          <ParamRow $h={22} $cut><Badge $cut>[X&lt;pos&gt;]</Badge></ParamRow>
          <ParamRow $h={49}><Badge>[Y&lt;pos&gt;]</Badge>A coordinate on the Y axis</ParamRow>
          <ParamRow $h={49}><Badge>[Z&lt;pos&gt;]</Badge>A coordinate on the Z axis</ParamRow>
          <Heading>Examples</Heading>
          <Para $h={42}>The most basic move sets a feedrate and moves the tool to the given position.</Para>
          <CodeBlock $h={76} $gap={2}>{"G0 F1500 ; set the feedrate to 1500mm/m\nG1 X90.6 Y13.8 ; move to the given X or Y position in mm"}</CodeBlock>
          <Para $h={43} $w={479}>The feedrate can be set on the same line as the move, when moving</Para>
          <CodeBlock $h={77} $gap={10}>{" "}</CodeBlock>
          <Quote $h={54} $gap={14} $pad={30}>
            <QuoteLine><span>The feedrate set here applies to all the moves that follow, up to the last m</span><span>ove made while extruding</span></QuoteLine>
          </Quote>
          <CodeBlock $h={77} $gap={9}>{" "}</CodeBlock>
          <Quote $h={55} $gap={0} $pad={41}>
            <QuoteLine><span>In the above example the first move is combined with the others, the</span><span>n started at a feedrate of</span></QuoteLine>
            <QuoteLine><span>1500mm/m and the second one</span></QuoteLine>
          </Quote>
        </Article>
      </SiteBody>
      <Cookie>
        We use cookies to ensure you get the best experience on our website
        <GotIt>Got it!</GotIt>
      </Cookie>
    </Page>
    <ScrollTrack><ScrollThumb /></ScrollTrack>
  </Viewport>
);

const LauncherDock = () => (
  <DockWrap>
    <Dock>
      <svg width="38" height="40" viewBox="0 0 38 40">
        <ellipse cx="19" cy="31" rx="17" ry="2.500" fill="#cfcfcb" />
        <path d="M8 11h22l6 18H2z" fill="#a9ab98" stroke="#77796a" />
        <g fill="#46689c" stroke="#2b4470" strokeWidth="0.700"><path d="M6 9h5l-1 4H5zM27 9h5l1 4h-5zM1 23h5l2 6H1zM32 23h5v6h-7z" /></g>
      </svg>
      <VRule $h={34} />
      <svg width="40" height="38" viewBox="0 0 40 38">
        <rect x="1" y="1" width="38" height="35" rx="3" fill="#b5b8b1" stroke="#74766f" />
        <rect x="4" y="4" width="32" height="26" fill="#2a421d" stroke="#111" />
        <path d="M5 5h30v6L5 20z" fill="#5b7a45" opacity="0.700" />
        <path d="M9 14l7 4-7 4M17 26h8" stroke="#fff" strokeWidth="2" fill="none" />
      </svg>
      <svg width="30" height="38" viewBox="0 0 30 38">
        <ellipse cx="15" cy="35" rx="15" ry="2.500" fill="#c9c9c5" />
        <path d="M2 6l3-3h20l3 3v29H2z" fill="#c77f18" stroke="#8a5205" />
        <path d="M5 3h20l2 4H3z" fill="#eaa846" />
        <path d="M5 10h20v10H5zM5 22h20v11H5z" fill="#b8710f" stroke="#8a5205" />
        <path d="M12 17v-3h6v3M12 29v-3h6v3" stroke="#6d4102" strokeWidth="1.500" fill="none" />
      </svg>
      <svg width="36" height="38" viewBox="0 0 36 38">
        <ellipse cx="19" cy="35" rx="14" ry="3" fill="#c9c9c5" />
        <circle cx="18" cy="18" r="16.500" fill="#5d8fce" stroke="#2d5596" />
        <path d="M4 10c4-6 10-8 12-7l2 3-4 5 1 5-4 4 4 4-1 9-6-8-5-8zM21 3c6 1 11 6 12 12l-3 6-2 7-4 3-2-9-4-4 2-6-1-5z" fill="#eef3fa" />
      </svg>
      <svg width="40" height="40" viewBox="0 0 40 40">
        <rect x="2" y="1" width="30" height="36" fill="#f3f3f1" stroke="#8c8e88" />
        <path d="M10 7h18M10 10h18M10 13h14M10 16h18M10 19h12M10 22h10" stroke="#bdbdb9" />
        <circle cx="21" cy="23" r="8" fill="#b5cdea" stroke="#777" strokeWidth="1.500" />
        <path d="M27 30l9 8" stroke="#8f918b" strokeWidth="4" />
      </svg>
      <VRule $h={34} />
      <svg width="40" height="38" viewBox="0 0 40 38">
        <path d="M2 4l2-2h13l2 4h13v26H2z" fill="#8f918b" stroke="#666" />
        <path d="M5 11h33v22H5z" fill="#73a0d6" stroke="#3566a8" />
        <path d="M6 12h31v6L6 28z" fill="#8db4e2" opacity="0.700" />
      </svg>
    </Dock>
  </DockWrap>
);

const servo: [string, string][] = [
  ["P", "1000.0000"], ["I", "0.0000"], ["D", "0.0000"], ["FF0", "0.0000"],
  ["FF1", "1.0000"], ["FF2", "0.0000"], ["Bias", "0.0000"], ["Deadband", "0.0000"],
];

const ConfigWindow = () => (
  <AppWindow x={261} y={474} w={756} h={536} title="Point and click configuration - shape1.pncconf" th={27} max>
    <PncHead>
      <Btn $w={57} $h={27} $off $bold>Help</Btn>
      <Btn $w={57} $h={27} $off $bold>Cancel</Btn>
      <BulbSlot><Bulb /></BulbSlot>
      <PncTitle>Z Motor</PncTitle>
      <Btn $w={67} $h={35} $off $bold>Back</Btn>
      <Btn $w={67} $h={35} $off $bold>Forward</Btn>
    </PncHead>
    <Notebook>
      <Frames>
        <Frame $w={190}>
          <Legend>Servo Info</Legend>
          {servo.map(([l, v]) => (
            <Field key={l} $lab={75}>{l}<Spin w={104} v={v} off center plain /></Field>
          ))}
          <Field $lab={83}>Max Output<Spin w={88} v="0.00" off plain /></Field>
        </Frame>
        <Frame $w={231}>
          <Legend>Stepper Info</Legend>
          {["Step On-Time", "Step Space", "Direction Hold", "Direction Setup"].map((l) => (
            <Field key={l} $lab={128}>{l}<Spin w={64} v="5000" off /></Field>
          ))}
          <Field $lab={100}>Driver Type:<Combo $w={120}><ComboText>Custom</ComboText><ComboArrow><i /></ComboArrow></Combo></Field>
        </Frame>
      </Frames>
      <Lower>
        <LowLeft>
          <ErrRow><ErrLabel>Rapid Speed Following Error:</ErrLabel><Spin w={80} v="10.0000" off />mm</ErrRow>
          <ErrRow><ErrLabel>Feed Speed Following Error:</ErrLabel><Spin w={80} v="1.0000" off />mm</ErrRow>
          <Checks>
            <Check><CheckBox />Invert Motor Direction</Check>
            <Check><CheckBox />Invert Encoder Direction</Check>
          </Checks>
          <TestSlot><Btn $w={132} $h={58} $off><Gears off />Test / Tune Axis</Btn></TestSlot>
        </LowLeft>
        <ScaleGrid>
          <span>encoder Scale:</span><Spin w={112} v="0.000" off plain />
          <Span2><Btn $w={69} $h={50} $off>{"Calculate\nScale"}</Btn></Span2>
          <span>Stepper Scale:</span><Spin w={112} v="120.000" off />
          <span>Maximum <u>V</u>elocity:</span><Spin w={112} v="250" off /><span>mm / min</span>
          <span>Maximum <u>A</u>cceleration:</span><Spin w={112} v="750.0" off /><span>mm / sec²</span>
        </ScaleGrid>
      </Lower>
    </Notebook>
  </AppWindow>
);

const TuneWindow = () => (
  <AppWindow x={1028} y={477} w={240} h={520} title="Z Axis Tune" th={26} active>
    <TuneBody>
      <TuneRow $h={35}><TuneLabel>Velocity:</TuneLabel><Spin w={56} v="1500" />mm / minute</TuneRow>
      <TuneRow $h={35}><TuneLabel>Acceleration:</TuneLabel><Spin w={56} v="1500" />mm / second²</TuneRow>
      <HLine />
      <TuneRow $h={39}>
        <TuneLabel>Jog:</TuneLabel>
        <Jog>
          <Btn $w={30} $h={30}><MinusPlus /></Btn>
          <Btn $w={30} $h={30}><MinusPlus plus /></Btn>
        </Jog>
      </TuneRow>
      <TuneRow $h={36}>
        <TuneLabel>Test Area:</TuneLabel>
        <Combo $w={38}><ComboText>±</ComboText><ComboArrow><i /></ComboArrow></Combo>
        <Spin w={56} v="20" off plain />mm
      </TuneRow>
      <TuneRow $h={25}><TuneLabel>Pause</TuneLabel><Spin w={54} v="2" />Seconds</TuneRow>
      <RunRow>
        <Btn $w={56} $h={30} $pressed $focus><Gears />Run</Btn>
        <Btn $w={76} $h={30} $pressed><Gears />Enable</Btn>
      </RunRow>
      <HLine />
      <TuneTabs>
        <TuneTab $w={77}>PID Tuning</TuneTab>
        <TuneTab $w={87} $on>Step Timing</TuneTab>
      </TuneTabs>
      <TunePage>
        <Cols><span>Current</span><span>Original</span></Cols>
        {["Step Time:", "Step Space:", "Direction Hold:", "Direction Setup:"].map((l) => (
          <Timing key={l}><span>{l}</span><Spin w={62} v="5000" half /><span>5000.0</span></Timing>
        ))}
      </TunePage>
      <Footer>
        <Btn $w={76} $h={30}><StopIcon /><span><u>C</u>ancel</span></Btn>
        <Btn $w={76} $h={30}><OkIcon /><span><u>O</u>K</span></Btn>
      </Footer>
    </TuneBody>
  </AppWindow>
);

export default function App() {
  return (
    <Desktop>
      <Global />
      <TopPanel />
      <Browser />
      <Site />
      <LauncherDock />
      <AppWindow x={1000} y={357} w={276} h={112} title="Hal Meter" th={27}>
        <Reading $h={29}>1499.838</Reading>
        <Reading $h={24}>speed_rpm</Reading>
        <HalButtons>
          <Btn $w={132} $h={23}><span><u>S</u>elect</span></Btn>
          <Btn $w={118} $h={23}><span>E<u>x</u>it</span></Btn>
        </HalButtons>
      </AppWindow>
      <AppWindow x={262} y={413} w={356} h={54} title="hm2_7i76e.0.stepgen.03.position-fb" th={27}>
        <Reading $h={23}>11.65178</Reading>
      </AppWindow>
      <AppWindow x={632} y={412} w={356} h={54} title="hm2_7i76e.0.stepgen.03.velocity-fb" th={27}>
        <Reading $h={23}>24.9973</Reading>
      </AppWindow>
      <ConfigWindow />
      <TuneWindow />
    </Desktop>
  );
}
